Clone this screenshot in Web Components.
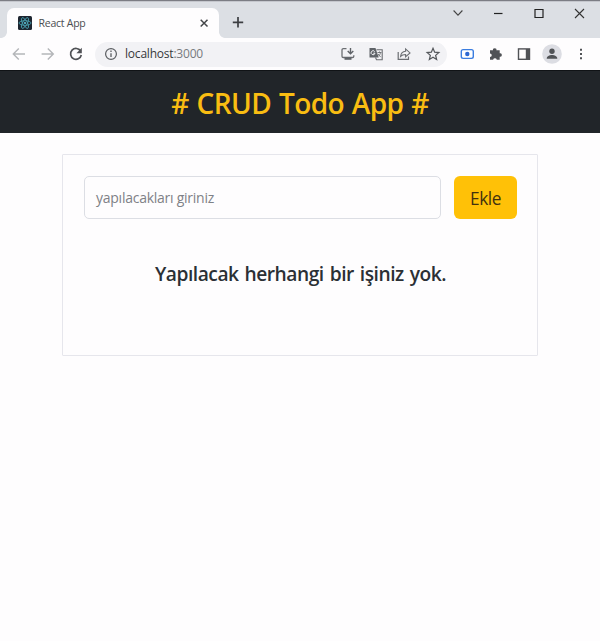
<!DOCTYPE html>
<html lang="tr">
<head>
<meta charset="utf-8">
<title>React App</title>
<style>
html,body{margin:0;height:100%;background:#fefdfe;overflow:hidden}
body{font-family:"Open Sans","Noto Sans",sans-serif}
</style>
</head>
<body>
<browser-window>
  <browser-tab slot="tab"><fit-text width="47">React App</fit-text></browser-tab>
  <address-bar slot="address"><fit-text width="78">localhost<span style="color:#777a7e">:3000</span></fit-text></address-bar>
  <todo-app>
    <todo-header slot="header"><fit-text width="257.500"># CRUD Todo App #</fit-text></todo-header>
    <todo-card>
      <todo-form slot="form"></todo-form>
      <fit-text width="291">Yapılacak herhangi bir işiniz yok.</fit-text>
    </todo-card>
  </todo-app>
</browser-window>
<script>
const define = (name, html, after) => customElements.define(name, class extends HTMLElement {
  connectedCallback() {
    if (this.shadowRoot) return;
    const t = document.createElement('template');
    t.innerHTML = html;
    this.attachShadow({mode: 'open'}).append(t.content.cloneNode(true));
    if (after) after(this);
  }
});

const icons = {
  back: '<path d="M15 9H3.600M8.800 3.500 3.300 9l5.500 5.500" fill="none" stroke="#b4b6b9" stroke-width="1.400"/>',
  forward: '<path d="M3.600 9H15M9.800 3.500 15.300 9l-5.500 5.500" fill="none" stroke="#b4b6b9" stroke-width="1.400"/>',
  reload: '<path d="M13.600 6A5.400 5.400 0 1 0 14.300 10" fill="none" stroke="#505256" stroke-width="1.700"/><path d="M14.800 2.800v5.400H9.400z" fill="#505256"/>',
  info: '<circle cx="9" cy="9" r="5.400" fill="none" stroke="#5a5d61" stroke-width="1.200"/><path d="M9 8.200v3.900M9 5.600V7" stroke="#5a5d61" stroke-width="1.300"/>',
  install: '<path d="M7.500 3.700H4.300a1.300 1.300 0 0 0-1.300 1.300v6.200a1.300 1.300 0 0 0 1.300 1.300h9.200a1.300 1.300 0 0 0 1.300-1.300v-1" fill="none" stroke="#6b6e72" stroke-width="1.300"/><path d="M5.500 12.500h7v2.300h-7z" fill="#5f6368"/><path d="M11.500 3v5.500M8.700 6l2.800 2.800L14.300 6" fill="none" stroke="#5f6368" stroke-width="1.400"/>',
  translate: '<path d="M2.500 3h6l3.200 9.500H2.500z" fill="#5f6368"/><path d="M9.500 4.800h5.700v10H9.500l-1-2.300" fill="none" stroke="#6b6e72" stroke-width="1.100"/><path d="M7.700 6.600A2 2 0 1 0 8 8.200H6.300" fill="none" stroke="#f4f4f7"/><path d="M10.500 7.500h4M12.500 6.500v1M13.500 7.500c-.3 2-1.200 3-2 3.700m-.5-2.200 2.700 3.100" fill="none" stroke="#6b6e72" stroke-width=".9"/>',
  share: '<path d="M3.200 7v7.300h10.300v-2.800" fill="none" stroke="#6b6e72" stroke-width="1.200"/><path d="M5.600 11.300c.4-3.400 2.200-4.900 5-5.100V3.900l4.400 4-4.400 3.900V9.500c-2.200 0-3.800.5-5 1.800z" fill="none" stroke="#6b6e72" stroke-width="1.100"/>',
  star: '<path d="m9 3.300 1.650 3.900 4.200.36-3.200 2.800.97 4.100L9 12.250l-3.620 2.210.97-4.100-3.200-2.800 4.200-.36z" fill="none" stroke="#55585c" stroke-width="1.250"/>',
  camera: '<rect x="3.300" y="4.600" width="12" height="8.800" rx="1.800" fill="#fff" stroke="#3b7de0" stroke-width="1.400"/><circle cx="9.300" cy="9" r="2.200" fill="#2c67d2"/>',
  puzzle: '<path d="M4 5.300h3a1.750 1.750 0 1 1 3.400 0h3.300v3a1.750 1.750 0 1 1 0 3.400v3.100h-2.900a1.900 1.900 0 0 0-3.700 0H4v-2.900a1.750 1.750 0 0 0 0-3.500z" fill="#505256"/>',
  panel: '<rect x="3.500" y="3.900" width="11" height="10.400" fill="none" stroke="#505256" stroke-width="1.400"/><path d="M10.800 4h4v10h-4z" fill="#505256"/>',
  profile: '<circle cx="9" cy="9" r="9.800" fill="#dcdde3"/><circle cx="9" cy="6.300" r="2.700" fill="#505256"/><path d="M3.700 13.800c0-5 10.600-5 10.600 0z" fill="#505256"/>',
  more: '<path d="M9 3.700h2v2H9zM9 8h2v2H9zM9 12.300h2v2H9z" fill="#505256"/>',
  down: '<path d="m4.600 6.500 4.400 4.600 4.400-4.600" fill="none" stroke="#444" stroke-width="1.100"/>',
  min: '<path d="M5 9.500h8.500" stroke="#222" stroke-width="1.200"/>',
  max: '<path d="M5 5.500h8v8H5z" fill="none" stroke="#222" stroke-width="1.200"/>',
  close: '<path d="m5 5 9 9m0-9-9 9" stroke="#333" stroke-width="1.100"/>',
  tabclose: '<path d="m5.700 5.700 6.800 6.800m0-6.800-6.800 6.800" stroke="#444649" stroke-width="1.500"/>',
  plus: '<path d="M2.800 9.300h10.400M8 4.100v10.400" stroke="#3c3e42" stroke-width="1.700"/>',
  react: '<rect x="2" y="2" width="14" height="14" rx="1.500" fill="#1d2530"/><g fill="none" stroke="#4aa7b8" stroke-width=".8"><ellipse cx="9" cy="9" rx="6" ry="2.300"/><ellipse cx="9" cy="9" rx="6" ry="2.300" transform="rotate(60 9 9)"/><ellipse cx="9" cy="9" rx="6" ry="2.300" transform="rotate(120 9 9)"/></g><circle cx="9" cy="9" r="1.100" fill="#5cc4d8"/>'
};

define('ui-icon', `<style>:host{display:block;width:18px;height:18px;flex:none}svg{display:block;overflow:visible}</style>
<svg width="18" height="18" viewBox="0 0 18 18"></svg>`, el => {
  el.shadowRoot.querySelector('svg').innerHTML = icons[el.getAttribute('name')];
});

define('browser-tab', `<style>
:host{position:relative;display:flex;align-items:center;box-sizing:border-box;width:212px;height:30px;padding:0 6px 0 8.500px;background:#fefdfe;border-radius:7px 7px 0 0;font-size:10.5px;line-height:14px;color:#4b4d51}
:host::before,:host::after{content:"";position:absolute;bottom:0;width:6px;height:6px}
:host::before{left:-6px;background:radial-gradient(circle at 0 0,transparent 5.500px,#fefdfe 6.200px)}
:host::after{right:-6px;background:radial-gradient(circle at 100% 0,transparent 5.500px,#fefdfe 6.200px)}
.t{flex:1;padding:0 0 1px 5px}
</style><ui-icon name="react"></ui-icon><div class="t"><slot></slot></div><ui-icon name="tabclose"></ui-icon>`);

define('address-bar', `<style>
:host{display:flex;align-items:center;box-sizing:border-box;width:352px;height:25px;padding:0 5.500px 0 7px;border-radius:13px;background:#f2f2f5;font-size:12px;line-height:16px;color:#37393c}
.t{flex:1;padding:0 0 0 5px}
.a{display:flex;gap:10.300px}
</style><ui-icon name="info"></ui-icon><div class="t"><slot></slot></div>
<div class="a"><ui-icon name="install"></ui-icon><ui-icon name="translate"></ui-icon><ui-icon name="share"></ui-icon><ui-icon name="star"></ui-icon></div>`);

define('browser-window', `<style>
:host{display:flex;flex-direction:column;width:600px;height:641px}
.strip{display:flex;box-sizing:border-box;height:38px;padding:8px 12px 0 7px;background:#dcdfe4;box-shadow:inset 0 1px #7c7d84,inset 0 2px #c5c7cd}
.plus{margin:5px auto 0 11px}
.win{display:flex;gap:22.400px;margin-top:-4px}
.bar{display:flex;align-items:center;box-sizing:border-box;height:32px;padding:0 10px;background:#fefdfe}
.nav{display:flex;gap:10px;margin-right:10px}
.nav ui-icon:last-child{margin-left:1px}
.act{display:flex;gap:10.300px;margin-left:11px}
main{flex:1;display:flex;flex-direction:column}
</style>
<div class="strip"><slot name="tab"></slot><ui-icon class="plus" name="plus"></ui-icon>
<div class="win"><ui-icon name="down"></ui-icon><ui-icon name="min"></ui-icon><ui-icon name="max"></ui-icon><ui-icon name="close"></ui-icon></div></div>
<div class="bar"><div class="nav"><ui-icon name="back"></ui-icon><ui-icon name="forward"></ui-icon><ui-icon name="reload"></ui-icon></div>
<slot name="address"></slot>
<div class="act"><ui-icon name="camera"></ui-icon><ui-icon name="puzzle"></ui-icon><ui-icon name="panel"></ui-icon><ui-icon name="profile"></ui-icon><ui-icon name="more"></ui-icon></div></div>
<main><slot></slot></main>`);

define('todo-app', `<style>:host{display:flex;flex-direction:column;flex:1}</style><slot name="header"></slot><slot></slot>`);

define('todo-header', `<style>
:host{display:flex;justify-content:center;align-items:center;box-sizing:border-box;height:63px;padding-top:3px;background:#212529;box-shadow:inset 0 1px #101316;color:#f9bd12;font-size:28px;font-weight:600;line-height:34px;word-spacing:1px}
</style><slot></slot>`);

define('todo-card', `<style>
:host{display:flex;flex-direction:column;box-sizing:border-box;width:476px;height:202px;margin:21px auto 0 62px;padding:21px 20px 0 21px;border:1px solid #e6e6ec;border-radius:1px}
.m{margin-top:41px;text-align:center;color:#2b3035;font-size:19.200px;font-weight:600;line-height:27px;word-spacing:1.500px}
</style><slot name="form"></slot><div class="m"><slot></slot></div>`);

define('todo-form', `<style>
:host{display:flex;gap:13px;height:43px}
.i{flex:1;display:flex;align-items:center;box-sizing:border-box;padding:0 11px;border:1px solid #dcdee4;border-radius:5px;font-size:14px;color:#7e8186}
.b{display:flex;align-items:center;justify-content:center;width:63px;border:0;padding:2px 0 0;border-radius:6px;background:#ffc107;font:17.300px "Open Sans","Noto Sans",sans-serif;color:#42310f}
</style><div class="i"><fit-text width="118">yapılacakları giriniz</fit-text></div><button class="b"><fit-text width="31">Ekle</fit-text></button>`);

/* Tracks its text so that the line has the given width. Defined last: it measures the inherited font of the elements above. */
define('fit-text', `<style>:host{display:inline-block;white-space:pre}</style><slot></slot>`, el => {
  const n = el.textContent.length;
  const w = el.getBoundingClientRect().width;
  const s = (Number(el.getAttribute('width')) - w) / n;
  el.style.letterSpacing = s.toFixed(3) + 'px';
});
</script>
</body>
</html>
